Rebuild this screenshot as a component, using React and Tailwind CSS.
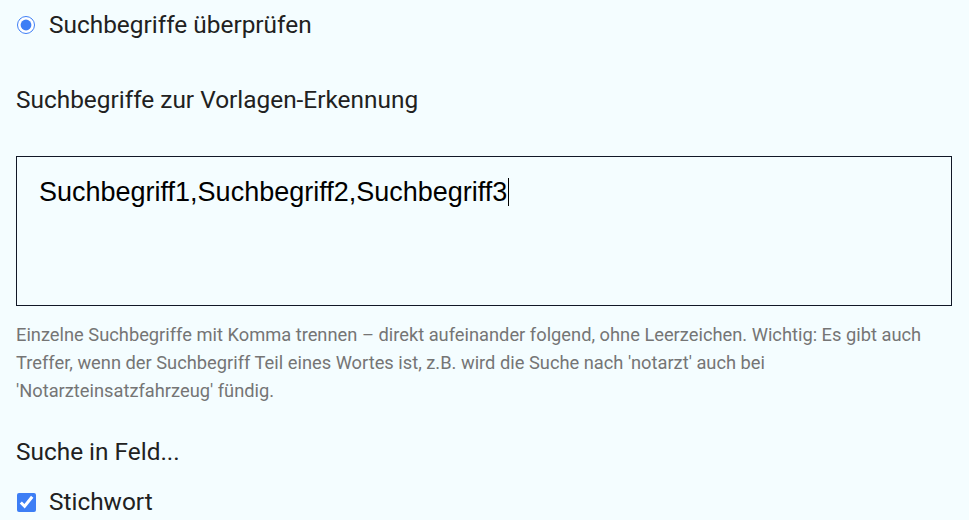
import React from 'react';

function App() {
  const terms = 'Suchbegriff1,Suchbegriff2,Suchbegriff3';

  return (
    <div className="min-h-screen bg-[#f4fdff] px-4 pt-[10px] font-['Roboto',sans-serif] text-[#212121]">
      {/* Radio option */}
      <label className="flex h-[30px] items-center">
        <input
          type="radio"
          defaultChecked
          className="ml-[1px] h-[18px] w-[18px] accent-[#3d7ef5]"
        />
        <span className="ml-[14px] text-[24.4px]">Suchbegriffe überprüfen</span>
      </label>

      {/* Keywords field */}
      <div className="mt-[45px] text-[24.4px] leading-[30px]">Suchbegriffe zur Vorlagen-Erkennung</div>

      <div className="mt-[41px] h-[150px] w-[936px] border border-[#111827] px-[22px] pt-[15px] font-['Liberation_Sans',Arial,sans-serif] text-[27px] text-black">
        <span>{terms}</span>
        <span className="ml-[1px] inline-block h-[28px] w-[1px] translate-y-[5px] bg-black align-baseline" />
      </div>

      <p className="mt-[15px] w-[936px] text-[18.3px] leading-[28px] text-[#757575]">
        Einzelne Suchbegriffe mit Komma trennen – direkt aufeinander folgend, ohne Leerzeichen. Wichtig: Es gibt auch
        Treffer, wenn der Suchbegriff Teil eines Wortes ist, z.B. wird die Suche nach 'notarzt' auch bei
        'Notarzteinsatzfahrzeug' fündig.
      </p>

      {/* Field selection */}
      <div className="mt-[32px] text-[24.4px] leading-[30px]">Suche in Feld...</div>

      <label className="mt-[20px] flex h-[30px] items-center">
        <input
          type="checkbox"
          defaultChecked
          className="ml-[1px] h-[19px] w-[19px] accent-[#3d7ef5]"
        />
        <span className="ml-[13px] text-[24.4px]">Stichwort</span>
      </label>
    </div>
  );
}

export default App;
